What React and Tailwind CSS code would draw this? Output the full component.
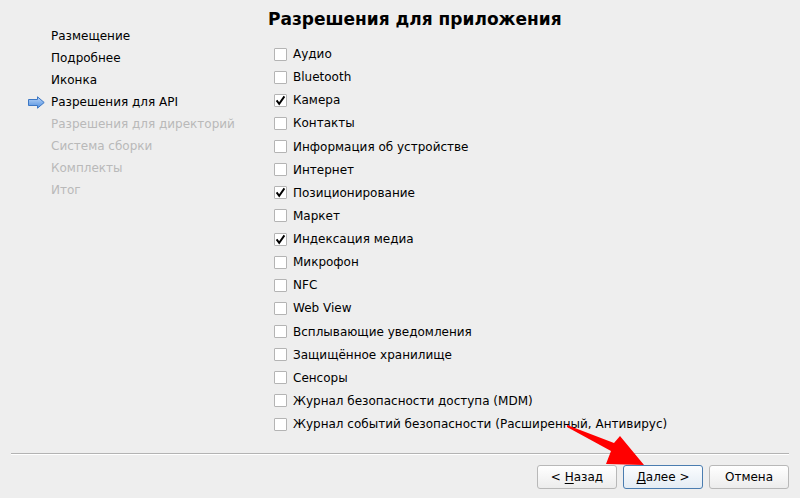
import React from 'react';

const steps = [
  { label: 'Размещение', done: true },
  { label: 'Подробнее', done: true },
  { label: 'Иконка', done: true },
  { label: 'Разрешения для API', done: true, current: true },
  { label: 'Разрешения для директорий' },
  { label: 'Система сборки' },
  { label: 'Комплекты' },
  { label: 'Итог' },
];

const permissions = [
  ['Аудио', false],
  ['Bluetooth', false],
  ['Камера', true],
  ['Контакты', false],
  ['Информация об устройстве', false],
  ['Интернет', false],
  ['Позиционирование', true],
  ['Маркет', false],
  ['Индексация медиа', true],
  ['Микрофон', false],
  ['NFC', false],
  ['Web View', false],
  ['Всплывающие уведомления', false],
  ['Защищённое хранилище', false],
  ['Сенсоры', false],
  ['Журнал безопасности доступа (MDM)', false],
  ['Журнал событий безопасности (Расширенный, Антивирус)', false],
];

const StepArrow = () => (
  <svg width="17" height="13" viewBox="0 0 17 13">
    <defs>
      <linearGradient id="ag" x1="0" y1="0" x2="0" y2="1">
        <stop offset="0" stopColor="#bcd6f7" />
        <stop offset="1" stopColor="#4f8fe0" />
      </linearGradient>
    </defs>
    <path d="M0.5 3.5 H9.5 V0.8 L16.2 6.5 L9.5 12.2 V9.5 H0.5 Z" fill="url(#ag)" stroke="#3b76c4" strokeWidth="1" strokeLinejoin="round" />
  </svg>
);

const Checkbox = ({ checked }) => (
  <div className="w-[13px] h-[13px] bg-white border border-[#b4b4b4] rounded-[1px] flex items-center justify-center">
    {checked && (
      <svg width="11" height="11" viewBox="0 0 11 11">
        <path d="M1.6 5.4 L4.2 8.8 L9.4 1.4" fill="none" stroke="#000" strokeWidth="1.9" />
      </svg>
    )}
  </div>
);

const Button = ({ children, primary }) => (
  <button
    className={`w-[80px] h-[24px] rounded-[3px] border text-[12px] text-black flex items-center justify-center ${
      primary
        ? 'border-[#4b7db0] bg-gradient-to-b from-[#fbfdff] to-[#e4ecf4]'
        : 'border-[#b8b8b8] bg-gradient-to-b from-[#ffffff] to-[#ececec]'
    }`}
  >
    <span>{children}</span>
  </button>
);

export default function App() {
  return (
    <div className="relative w-[800px] h-[498px] bg-[#eeeeee] flex flex-col overflow-hidden font-['DejaVu_Sans',sans-serif] text-[12px] text-black">
      <div className="flex h-[453px]">
        {/* Steps */}
        <div className="w-[268px] pl-[28px] pt-[25px] flex flex-col">
          {steps.map((s) => (
            <div key={s.label} className="h-[22px] flex items-center">
              <div className="w-[23px] flex items-center">{s.current && <StepArrow />}</div>
              <span className={s.done ? 'text-black' : 'text-[#b9b9b9]'}>{s.label}</span>
            </div>
          ))}
        </div>

        {/* Permissions */}
        <div className="flex-1 flex flex-col">
          <div className="h-[39px] pt-[1px] flex items-center text-[17px] font-bold">Разрешения для приложения</div>
          <div className="mt-[3.5px] pl-[6px] flex flex-col">
            {permissions.map(([label, checked]) => (
              <div key={label} className="h-[23.125px] flex items-center gap-[6px]">
                <Checkbox checked={checked} />
                <span>{label}</span>
              </div>
            ))}
          </div>
        </div>
      </div>

      <div className="mx-[11px] border-t border-[#b3b3b3] border-b border-b-white" />

      <div className="flex justify-end gap-[6px] pr-[11px] mt-[10px]">
        <Button>
          &lt; <span className="underline underline-offset-2">Н</span>азад
        </Button>
        <Button primary>
          <span className="underline underline-offset-2">Д</span>алее &gt;
        </Button>
        <Button>Отмена</Button>
      </div>

      {/* red pointer overlay */}
      <svg className="absolute left-0 top-0 pointer-events-none" width="800" height="498" viewBox="0 0 800 498">
        <polygon points="567,425 614,443 620,436 644,465 606,464 611,451 567,427" fill="#ff0000" />
      </svg>
    </div>
  );
}
